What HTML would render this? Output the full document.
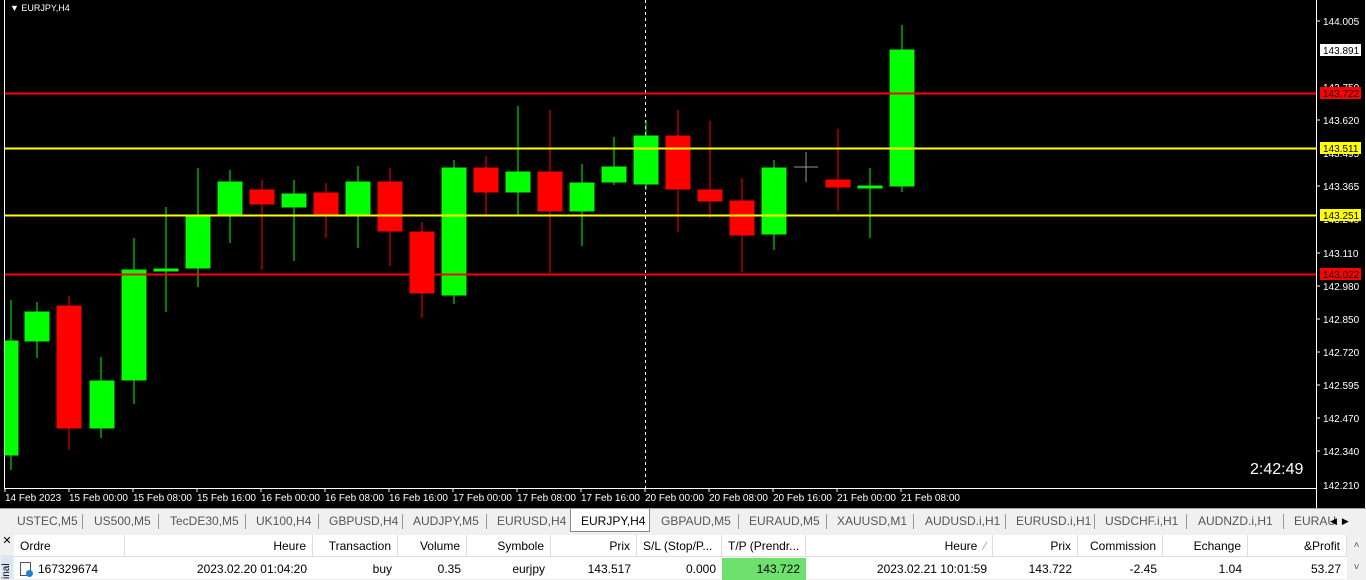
<!DOCTYPE html>
<html><head><meta charset="utf-8"><style>
*{margin:0;padding:0;box-sizing:border-box}
body{width:1366px;height:579px;overflow:hidden;background:#f0f0f0;font-family:"Liberation Sans",sans-serif;position:relative}
.tabs{position:absolute;top:508px;left:0;width:1366px;height:24px;background:#f0f0f0;border-top:1px solid #a0a0a0}
.tab{position:absolute;top:4px;font-size:12px;color:#555;height:17px;line-height:17px;text-align:center}
.sep{position:absolute;top:5px;width:1px;height:15px;background:#999}
.tbl{position:absolute;top:535px;left:14px;width:1352px;height:44px;background:#fff}
.c{position:absolute;font-size:12px;color:#000;height:22px;line-height:22px;padding:0 6px;white-space:nowrap;overflow:hidden}
.h{top:0;border-right:1px solid #ddd;border-bottom:1px solid #ddd}
.r{top:23px}
.R{text-align:right}
</style></head><body>
<svg width="1366" height="508" style="position:absolute;left:0;top:0" font-family="Liberation Sans, sans-serif" font-size="10">
<rect width="1366" height="508" fill="#000"/>
<line x1="4.5" y1="0" x2="4.5" y2="488" stroke="#fff"/>
<line x1="4" y1="488.5" x2="1317" y2="488.5" stroke="#fff"/>
<line x1="1316.5" y1="0" x2="1316.5" y2="508" stroke="#fff"/>
<line x1="1365.5" y1="0" x2="1365.5" y2="508" stroke="#fff"/>
<text x="10" y="11" fill="#fff" font-size="9">▼ EURJPY,H4</text>
<line x1="645.5" y1="0" x2="645.5" y2="488" stroke="#fff" stroke-dasharray="3,3"/>
<g stroke-width="1">
<g stroke="#00ff00" fill="#00ff00">
<line x1="11" y1="300" x2="11" y2="470"/><rect x="5" y="341" width="13" height="114"/>
<line x1="37" y1="302" x2="37" y2="358"/><rect x="25" y="312" width="24" height="29"/>
<line x1="101" y1="357" x2="101" y2="438"/><rect x="90" y="381" width="24" height="47"/>
<line x1="134" y1="238" x2="134" y2="404"/><rect x="122" y="270" width="24" height="110"/>
<line x1="166" y1="207" x2="166" y2="312"/><rect x="154" y="269" width="24" height="2"/>
<line x1="198" y1="168" x2="198" y2="287"/><rect x="186" y="216" width="24" height="52"/>
<line x1="230" y1="170" x2="230" y2="243"/><rect x="218" y="182" width="24" height="33"/>
<line x1="294" y1="180" x2="294" y2="261"/><rect x="282" y="194" width="24" height="13"/>
<line x1="358" y1="166" x2="358" y2="248"/><rect x="346" y="182" width="24" height="33"/>
<line x1="454" y1="160" x2="454" y2="304"/><rect x="442" y="168" width="24" height="127"/>
<line x1="518" y1="106" x2="518" y2="215"/><rect x="506" y="172" width="24" height="20"/>
<line x1="582" y1="164" x2="582" y2="246"/><rect x="570" y="183" width="24" height="28"/>
<line x1="614" y1="137" x2="614" y2="185"/><rect x="602" y="167" width="24" height="15"/>
<line x1="646" y1="120" x2="646" y2="190"/><rect x="634" y="136" width="24" height="48"/>
<line x1="774" y1="160" x2="774" y2="250"/><rect x="762" y="168" width="24" height="66"/>
<line x1="870" y1="168" x2="870" y2="238"/><rect x="858" y="186" width="24" height="2"/>
<line x1="902" y1="25" x2="902" y2="192"/><rect x="890" y="50" width="24" height="136"/>
</g>
<g stroke="#ff0000" fill="#ff0000">
<line x1="69" y1="296" x2="69" y2="450"/><rect x="57" y="306" width="24" height="122"/>
<line x1="262" y1="180" x2="262" y2="270"/><rect x="250" y="190" width="24" height="14"/>
<line x1="326" y1="183" x2="326" y2="238"/><rect x="314" y="193" width="24" height="23"/>
<line x1="390" y1="168" x2="390" y2="266"/><rect x="378" y="182" width="24" height="49"/>
<line x1="422" y1="222" x2="422" y2="318"/><rect x="410" y="232" width="24" height="61"/>
<line x1="486" y1="156" x2="486" y2="216"/><rect x="474" y="168" width="24" height="24"/>
<line x1="550" y1="110" x2="550" y2="273"/><rect x="538" y="172" width="24" height="39"/>
<line x1="678" y1="110" x2="678" y2="232"/><rect x="666" y="136" width="24" height="53"/>
<line x1="710" y1="121" x2="710" y2="218"/><rect x="698" y="190" width="24" height="11"/>
<line x1="742" y1="178" x2="742" y2="272"/><rect x="730" y="201" width="24" height="34"/>
<line x1="838" y1="129" x2="838" y2="211"/><rect x="826" y="180" width="24" height="7"/>
</g>
<g stroke="#999"><line x1="806" y1="152" x2="806" y2="182"/><line x1="794" y1="167" x2="818" y2="167"/></g>
</g>
<line x1="5" y1="93.5" x2="1316" y2="93.5" stroke="#ff0000" stroke-width="2"/>
<line x1="5" y1="148.5" x2="1316" y2="148.5" stroke="#ffff00" stroke-width="2"/>
<line x1="5" y1="215.5" x2="1316" y2="215.5" stroke="#ffff00" stroke-width="2"/>
<line x1="5" y1="274.5" x2="1316" y2="274.5" stroke="#ff0000" stroke-width="2"/>
<g fill="#fff">
<text x="1323" y="25">144.005</text><text x="1323" y="91">143.750</text><text x="1323" y="124">143.620</text>
<text x="1323" y="157">143.495</text><text x="1323" y="190">143.365</text><text x="1323" y="223">143.240</text>
<text x="1323" y="257">143.110</text><text x="1323" y="290">142.980</text><text x="1323" y="323">142.850</text>
<text x="1323" y="356">142.720</text><text x="1323" y="389">142.595</text><text x="1323" y="422">142.470</text>
<text x="1323" y="455">142.340</text><text x="1323" y="489">142.210</text>
</g>
<g stroke="#fff"><line x1="1317" y1="21" x2="1320" y2="21"/><line x1="1317" y1="120" x2="1320" y2="120"/><line x1="1317" y1="186" x2="1320" y2="186"/><line x1="1317" y1="253" x2="1320" y2="253"/><line x1="1317" y1="286" x2="1320" y2="286"/><line x1="1317" y1="319" x2="1320" y2="319"/><line x1="1317" y1="352" x2="1320" y2="352"/><line x1="1317" y1="385" x2="1320" y2="385"/><line x1="1317" y1="418" x2="1320" y2="418"/><line x1="1317" y1="451" x2="1320" y2="451"/></g>
<rect x="1320" y="44" width="41" height="12" fill="#fff"/><text x="1323" y="54" fill="#000">143.891</text>
<rect x="1320" y="87" width="41" height="12" fill="#ff0000"/><text x="1323" y="97" fill="#000">143.722</text>
<rect x="1320" y="142" width="41" height="12" fill="#ffff00"/><text x="1323" y="152" fill="#000">143.511</text>
<rect x="1320" y="209" width="41" height="12" fill="#ffff00"/><text x="1323" y="219" fill="#000">143.251</text>
<rect x="1320" y="268" width="41" height="12" fill="#ff0000"/><text x="1323" y="278" fill="#000">143.022</text>
<text x="1250" y="474" fill="#fff" font-size="16">2:42:49</text>
<g fill="#fff">
<text x="5" y="501">14 Feb 2023</text><text x="69" y="501">15 Feb 00:00</text><text x="133" y="501">15 Feb 08:00</text>
<text x="197" y="501">15 Feb 16:00</text><text x="261" y="501">16 Feb 00:00</text><text x="325" y="501">16 Feb 08:00</text>
<text x="389" y="501">16 Feb 16:00</text><text x="453" y="501">17 Feb 00:00</text><text x="517" y="501">17 Feb 08:00</text>
<text x="581" y="501">17 Feb 16:00</text><text x="645" y="501">20 Feb 00:00</text><text x="709" y="501">20 Feb 08:00</text>
<text x="773" y="501">20 Feb 16:00</text><text x="837" y="501">21 Feb 00:00</text><text x="901" y="501">21 Feb 08:00</text>
</g>
<g stroke="#fff"><line x1="5" y1="488" x2="5" y2="492"/><line x1="69" y1="488" x2="69" y2="492"/><line x1="133" y1="488" x2="133" y2="492"/><line x1="197" y1="488" x2="197" y2="492"/><line x1="261" y1="488" x2="261" y2="492"/><line x1="325" y1="488" x2="325" y2="492"/><line x1="389" y1="488" x2="389" y2="492"/><line x1="453" y1="488" x2="453" y2="492"/><line x1="517" y1="488" x2="517" y2="492"/><line x1="581" y1="488" x2="581" y2="492"/><line x1="645" y1="488" x2="645" y2="492"/><line x1="709" y1="488" x2="709" y2="492"/><line x1="773" y1="488" x2="773" y2="492"/><line x1="837" y1="488" x2="837" y2="492"/><line x1="901" y1="488" x2="901" y2="492"/></g>
</svg>
<div class="tabs">
<div style="position:absolute;left:570px;top:0;width:80px;height:23px;background:#fff;border:1px solid #888;border-top:none"></div>
<span class="tab" style="left:17px">USTEC,M5</span><div class="sep" style="left:82px"></div>
<span class="tab" style="left:94px">US500,M5</span><div class="sep" style="left:158px"></div>
<span class="tab" style="left:170px">TecDE30,M5</span><div class="sep" style="left:245px"></div>
<span class="tab" style="left:256px">UK100,H4</span><div class="sep" style="left:318px"></div>
<span class="tab" style="left:329px">GBPUSD,H4</span><div class="sep" style="left:402px"></div>
<span class="tab" style="left:413px">AUDJPY,M5</span><div class="sep" style="left:486px"></div>
<span class="tab" style="left:497px">EURUSD,H4</span>
<span class="tab" style="left:581px;color:#000">EURJPY,H4</span>
<span class="tab" style="left:661px">GBPAUD,M5</span><div class="sep" style="left:738px"></div>
<span class="tab" style="left:749px">EURAUD,M5</span><div class="sep" style="left:826px"></div>
<span class="tab" style="left:837px">XAUUSD,M1</span><div class="sep" style="left:913px"></div>
<span class="tab" style="left:925px">AUDUSD.i,H1</span><div class="sep" style="left:1005px"></div>
<span class="tab" style="left:1016px">EURUSD.i,H1</span><div class="sep" style="left:1094px"></div>
<span class="tab" style="left:1105px">USDCHF.i,H1</span><div class="sep" style="left:1186px"></div>
<span class="tab" style="left:1198px">AUDNZD.i,H1</span><div class="sep" style="left:1283px"></div>
<span class="tab" style="left:1294px">EURAU</span>
<span class="tab" style="left:1330px;color:#000;font-size:9px">◀ &nbsp;▶</span>
</div>
<div style="position:absolute;left:0;top:535px;width:14px;height:44px;background:#f0f0f0;font-size:11px">
<div style="text-align:center;line-height:12px">✕</div>
<div style="position:absolute;top:20px;left:1px;width:12px;height:24px;background:#dbe6f4;font-size:10px;writing-mode:vertical-rl;transform:rotate(180deg)">inal</div>
</div>
<div class="tbl">
<div class="c h" style="left:0;width:111px">Ordre</div>
<div class="c h R" style="left:111px;width:188px">Heure</div>
<div class="c h R" style="left:299px;width:85px">Transaction</div>
<div class="c h R" style="left:384px;width:69px">Volume</div>
<div class="c h R" style="left:453px;width:84px">Symbole</div>
<div class="c h R" style="left:537px;width:86px">Prix</div>
<div class="c h" style="left:623px;width:85px">S/L (Stop/P...</div>
<div class="c h" style="left:708px;width:84px">T/P (Prendr...</div>
<div class="c h R" style="left:792px;width:187px">Heure &nbsp;<span style="color:#999">⁄</span></div>
<div class="c h R" style="left:979px;width:85px">Prix</div>
<div class="c h R" style="left:1064px;width:85px">Commission</div>
<div class="c h R" style="left:1149px;width:85px">Echange</div>
<div class="c h R" style="left:1234px;width:99px">&amp;Profit</div>
<div class="c r" style="left:0;width:111px;padding-left:24px">167329674</div>
<div style="position:absolute;left:6px;top:27px;width:11px;height:14px;border:1px solid #555;background:#fff"></div>
<div style="position:absolute;left:12px;top:35px;width:7px;height:7px;border-radius:50%;background:#1e7fd8"></div>
<div class="c r R" style="left:111px;width:188px">2023.02.20 01:04:20</div>
<div class="c r R" style="left:299px;width:85px">buy</div>
<div class="c r R" style="left:384px;width:69px">0.35</div>
<div class="c r R" style="left:453px;width:84px">eurjpy</div>
<div class="c r R" style="left:537px;width:86px">143.517</div>
<div class="c r R" style="left:623px;width:85px">0.000</div>
<div class="c r R" style="left:708px;width:84px;background:#6ee06e">143.722</div>
<div class="c r R" style="left:792px;width:187px">2023.02.21 10:01:59</div>
<div class="c r R" style="left:979px;width:85px">143.722</div>
<div class="c r R" style="left:1064px;width:85px">-2.45</div>
<div class="c r R" style="left:1149px;width:85px">1.04</div>
<div class="c r R" style="left:1234px;width:99px">53.27</div>
<div style="position:absolute;left:1333px;top:0;width:19px;height:44px;background:#f0f0f0;font-size:10px;text-align:center;color:#555;line-height:22px">˄<br>˅</div>
</div>
</body></html>
